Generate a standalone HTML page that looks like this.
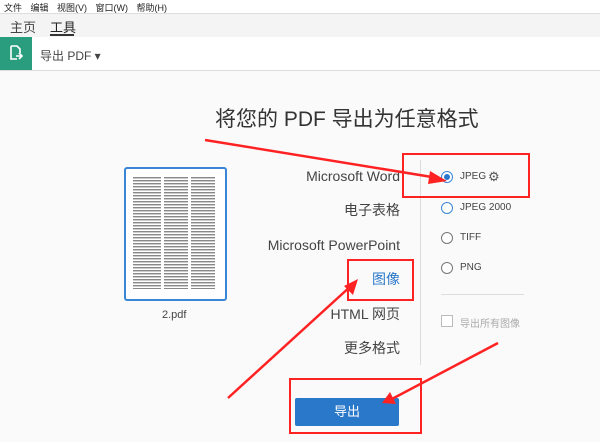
<!DOCTYPE html>
<html><head><meta charset="utf-8"><style>
body{margin:0;width:600px;height:442px;overflow:hidden;background:#fafafa;font-family:"Liberation Sans","Noto Sans CJK SC",sans-serif;position:relative;color:#333}
.a{position:absolute;white-space:nowrap}
.r{position:absolute;width:10px;height:10px;border:1px solid #777;border-radius:50%;background:#fff}
</style></head><body>
<div class="a" style="left:0;top:0;width:600px;height:13px;background:#fff"></div>
<div class="a" style="left:4px;top:1px;font-size:9px;color:#222;word-spacing:6px">文件 编辑 视图(V) 窗口(W) 帮助(H)</div>
<div class="a" style="left:0;top:13px;width:600px;height:24px;background:#f4f4f4;border-top:1px solid #ddd"></div>
<div class="a" style="left:10px;top:17px;font-size:13px;color:#444">主页</div>
<div class="a" style="left:50px;top:17px;font-size:13px;color:#222">工具</div>
<div class="a" style="left:50px;top:34px;width:24px;height:2px;background:#333"></div>
<div class="a" style="left:0;top:37px;width:600px;height:33px;background:#fff;border-bottom:1px solid #ddd"></div>
<div class="a" style="left:0;top:37px;width:32px;height:33px;background:#2b9d7f"></div>
<svg class="a" style="left:8px;top:45px" width="16" height="16" viewBox="0 0 16 16"><path d="M3 1h6l3 3v4M3 1v13h6" fill="none" stroke="#fff" stroke-width="1.6"/><path d="M8 11h6M11 8l3 3-3 3" fill="none" stroke="#fff" stroke-width="1.6"/></svg>
<div class="a" style="left:40px;top:47px;font-size:12px;color:#444">导出 PDF ▾</div>
<div class="a" style="left:215px;top:103px;font-size:21px;color:#333">将您的 PDF 导出为任意格式</div>
<div class="a" style="left:124px;top:167px;width:99px;height:130px;border:2px solid #3a86d6;border-radius:3px;background:#fff"></div>
<div class="a" style="left:133px;top:176px;width:82px;height:113px;background:repeating-linear-gradient(#fff 0 1px,#888 1px 2px,#ccc 2px 3px)"></div>
<div class="a" style="left:161px;top:176px;width:3px;height:113px;background:#fff"></div>
<div class="a" style="left:188px;top:176px;width:3px;height:113px;background:#fff"></div>
<div class="a" style="left:162px;top:309px;font-size:11px;color:#444">2.pdf</div>
<div class="a" style="right:200px;top:159px;font-size:14px;color:#444;text-align:right;line-height:34.4px">Microsoft Word<br>电子表格<br>Microsoft PowerPoint<br><span style="color:#2a78c9">图像</span><br>HTML 网页<br>更多格式</div>
<div class="a" style="left:420px;top:160px;width:1px;height:205px;background:#ddd"></div>
<div class="r" style="left:441px;top:171px;border-color:#3a86d6"><div style="position:absolute;left:2px;top:2px;width:6px;height:6px;border-radius:50%;background:#2a78c9"></div></div>
<div class="a" style="left:460px;top:171px;font-size:10px;color:#444">JPEG</div>
<div class="a" style="left:488px;top:169px;font-size:13px;color:#555">⚙</div>
<div class="r" style="left:441px;top:202px;border-color:#3a86d6"></div>
<div class="a" style="left:460px;top:202px;font-size:10px;color:#444">JPEG 2000</div>
<div class="r" style="left:441px;top:232px"></div>
<div class="a" style="left:460px;top:232px;font-size:10px;color:#444">TIFF</div>
<div class="r" style="left:441px;top:262px"></div>
<div class="a" style="left:460px;top:262px;font-size:10px;color:#444">PNG</div>
<div class="a" style="left:441px;top:294px;width:83px;height:1px;background:#ddd"></div>
<div class="a" style="left:441px;top:315px;width:10px;height:10px;border:1px solid #bbb;background:#fff"></div>
<div class="a" style="left:460px;top:315px;font-size:10px;color:#aaa">导出所有图像</div>
<div class="a" style="left:295px;top:398px;width:104px;height:28px;background:#2a78c9;border-radius:2px;color:#fff;font-size:13px;text-align:center;line-height:28px">导出</div>
<svg class="a" style="left:0;top:0" width="600" height="442">
<g fill="none" stroke="#f22" stroke-width="2">
<rect x="403" y="154" width="126" height="43"/>
<rect x="348" y="260" width="65" height="40"/>
<rect x="290" y="379" width="131" height="54"/>
</g>
<g stroke="#f22" stroke-width="2.5"><line x1="205" y1="140" x2="438" y2="178"/><line x1="228" y1="398" x2="352" y2="285"/><line x1="498" y1="343" x2="390" y2="400"/></g>
<g fill="#f22"><polygon points="447,181 430,171 428,184"/><polygon points="358,279 344,286 353,295"/><polygon points="382,403 390,392 396,404"/></g>
</svg>
</body></html>
